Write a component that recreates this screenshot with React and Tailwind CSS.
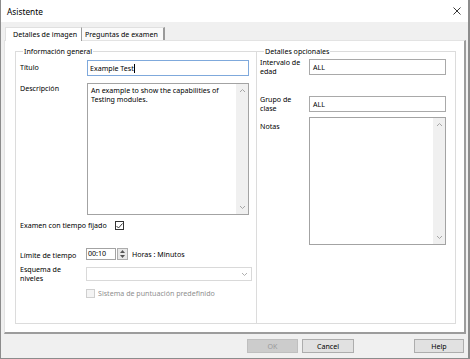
import React from "react";

function ScrollCol() {
  return (
    <div className="absolute right-0 top-0 bottom-0 w-[12px] bg-[#f0f0f0] flex flex-col justify-between items-center py-[4px]">
      <svg width="7" height="5" viewBox="0 0 7 5"><path d="M1 4 L3.5 1.5 L6 4" fill="none" stroke="#a6a6a6" strokeWidth="1" /></svg>
      <svg width="7" height="5" viewBox="0 0 7 5"><path d="M1 1 L3.5 3.5 L6 1" fill="none" stroke="#a6a6a6" strokeWidth="1" /></svg>
    </div>
  );
}

function Check({ disabled, checked }) {
  return (
    <div className={"w-[9px] h-[9px] border flex items-center justify-center " + (disabled ? "border-[#cfcfcf] bg-[#f4f4f4]" : "border-[#333] bg-white")}>
      {checked && (
        <svg width="7" height="6" viewBox="0 0 7 6"><path d="M0.5 3 L2.5 5 L6.5 0.5" fill="none" stroke="#222" strokeWidth="0.9" /></svg>
      )}
    </div>
  );
}

export default function App() {
  return (
    <div className="w-[470px] h-[359px] bg-[#f0f0f0] border-l border-r-2 border-b border-[#8c8c8c] flex flex-col text-black font-['Noto_Sans',sans-serif] text-[7.1px] leading-[9px] overflow-hidden">
      {/* title bar */}
      <div className="h-[22px] bg-white flex items-center justify-between pl-[6px] pr-[7px] shrink-0">
        <span className="text-[8.3px]">Asistente</span>
        <svg width="8" height="8" viewBox="0 0 8 8"><path d="M0.5 0.5 L7.5 7.5 M7.5 0.5 L0.5 7.5" stroke="#222" strokeWidth="0.9" /></svg>
      </div>
      {/* tabs */}
      <div className="flex pl-[4px] pt-[4px] h-[18px] shrink-0 items-end">
        <div className="h-[14px] w-[77px] bg-white border-l border-t border-[#e0e0e0] border-r border-r-[#9a9a9a] flex items-center pl-[7px] relative z-10 -mb-[1px]">
          Detalles de imagen
        </div>
        <div className="h-[13px] w-[83px] bg-[#fafafa] border-t border-[#e0e0e0] border-r-2 border-r-[#9a9a9a] flex items-center pl-[3px]">
          Preguntas de examen
        </div>
      </div>
      {/* panel */}
      <div className="ml-[3px] w-[462px] h-[294px] bg-white border-l border-t border-[#e3e3e3] border-r-2 border-b-2 border-r-[#9c9c9c] border-b-[#9c9c9c] shrink-0 flex pt-[5px] pl-[10px]">
        {/* left group */}
        <fieldset className="w-[242px] h-[278px] border border-[#dcdcdc] pl-[4px] flex flex-col">
          <legend className="ml-[3px] px-[1px] leading-[10px]">Información general</legend>
          <div className="flex mt-[4px]">
            <div className="w-[67px] pt-[3px]">Título</div>
            <div className="w-[162px] h-[16px] border border-[#7fa9dc] flex items-center pl-[2px]">
              Example Test<span className="inline-block w-[1px] h-[9px] bg-black" />
            </div>
          </div>
          <div className="flex mt-[7px]">
            <div className="w-[67px] pt-[1px]">Descripción</div>
            <div className="w-[162px] h-[132px] border border-[#a3a3a3] relative pl-[3px] pt-[2px]">
              <div className="w-[140px]">An example to show the capabilities of Testing modules.</div>
              <ScrollCol />
            </div>
          </div>
          <div className="flex mt-[6px] items-center">
            <div className="w-[95px]">Examen con tiempo fijado</div>
            <Check checked />
          </div>
          <div className="flex mt-[17px] items-center">
            <div className="w-[66px] pt-[4px]">Límite de tiempo</div>
            <div className="w-[30px] h-[12px] border border-[#a3a3a3] flex items-center pl-[1px]">00:10</div>
            <div className="ml-[1px] w-[11px] h-[12px] border border-[#adadad] bg-[#e8e8e8] flex flex-col items-center justify-around">
              <svg width="5" height="3" viewBox="0 0 5 3"><path d="M0 3 L2.5 0 L5 3 Z" fill="#555" /></svg>
              <svg width="5" height="3" viewBox="0 0 5 3"><path d="M0 0 L2.5 3 L5 0 Z" fill="#555" /></svg>
            </div>
            <div className="ml-[4px] pt-[1px]">Horas : Minutos</div>
          </div>
          <div className="flex mt-[7px]">
            <div className="w-[66px] leading-[9px] -mt-[2px]">Esquema de<br />niveles</div>
            <div className="w-[166px] h-[14px] border border-[#d9d9d9] flex items-center justify-end pr-[3px]">
              <svg width="7" height="5" viewBox="0 0 7 5"><path d="M1 1 L3.5 3.5 L6 1" fill="none" stroke="#b0b0b0" strokeWidth="1" /></svg>
            </div>
          </div>
          <div className="flex mt-[6px] items-center pl-[66px]">
            <Check disabled />
            <span className="ml-[3px] text-[#8f8f8f]">Sistema de puntuación predefinido</span>
          </div>
        </fieldset>
        {/* right group */}
        <fieldset className="w-[199px] h-[278px] border border-l-0 border-[#dcdcdc] pl-[3px] flex flex-col">
          <legend className="ml-[4px] px-[1px] leading-[10px]">Detalles opcionales</legend>
          <div className="flex mt-[3px]">
            <div className="w-[49px] leading-[9px] -mt-[1px]">Intervalo de<br />edad</div>
            <div className="w-[137px] h-[16px] border border-[#a9a9a9] flex items-center pl-[3px]">ALL</div>
          </div>
          <div className="flex mt-[20px]">
            <div className="w-[49px] leading-[9px] -mt-[1px]">Grupo de<br />clase</div>
            <div className="w-[137px] h-[16px] border border-[#a9a9a9] flex items-center pl-[3px]">ALL</div>
          </div>
          <div className="flex mt-[4px]">
            <div className="w-[49px] pt-[5px]">Notas</div>
            <div className="w-[137px] h-[128px] border border-[#a3a3a3] relative">
              <ScrollCol />
            </div>
          </div>
        </fieldset>
      </div>
      {/* buttons */}
      <div className="flex pt-[5px] pl-[246px]">
        <div className="w-[51px] h-[14px] bg-[#cccccc] border border-[#bfbfbf] text-[#9a9a9a] flex items-center justify-center">OK</div>
        <div className="ml-[4px] w-[52px] h-[14px] bg-[#e1e1e1] border border-[#adadad] flex items-center justify-center">Cancel</div>
        <div className="ml-[60px] w-[50px] h-[14px] bg-[#e1e1e1] border border-[#adadad] flex items-center justify-center">Help</div>
      </div>
    </div>
  );
}
